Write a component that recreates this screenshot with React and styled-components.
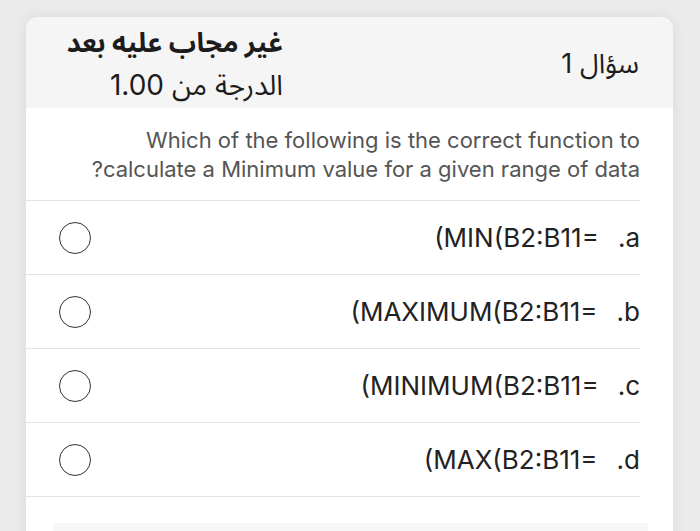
import React from "react";
import styled, { createGlobalStyle } from "styled-components";

const GlobalStyle = createGlobalStyle`
  html, body {
    margin: 0;
    padding: 0;
    background: #ebebeb;
    height: 100%;
    overflow: hidden;
  }
  body {
    font-family: "Inter", "Noto Sans Arabic", "DejaVu Sans", sans-serif;
  }
`;

const Page = styled.div`
  padding: 17px 27px 0 26px;
`;

const Card = styled.div`
  background: #fff;
  border-radius: 12px;
  box-shadow: 0 0 14px rgba(0, 0, 0, 0.08);
  overflow: hidden;
  min-height: 560px;
`;

const Header = styled.div`
  direction: rtl;
  display: grid;
  grid-template-columns: 356px 1fr;
  align-items: center;
  height: 91px;
  box-sizing: border-box;
  background: #f5f5f5;
  padding: 4px 34px 1px 0;
  color: #1c1c1c;
`;

const QuestionNo = styled.div`
  font-size: 27px;
  justify-self: start;
`;

const Status = styled.div`
  font-size: 27px;
  line-height: 42px;
  text-align: right;
`;

const StatusLine = styled.div`
  font-weight: ${(p) => (p.$bold ? 700 : 400)};
  font-size: ${(p) => (p.$bold ? "27px" : "28px")};
`;

const QuestionText = styled.div`
  direction: rtl;
  color: #555;
  font-size: 22px;
  line-height: 29px;
  padding: 18px 33px 16px 33px;
  text-align: right;
`;

const Options = styled.div`
  margin-right: 33px;
  border-top: 1px solid #e2e2e2;
`;

const OptionRow = styled.label`
  direction: rtl;
  display: flex;
  align-items: center;
  height: 73px;
  border-bottom: 1px solid #e2e2e2;
  padding-left: 33px;
  color: #222;
  font-size: 26px;
`;

const Letter = styled.span`
  margin-left: 19px;
`;

const Answer = styled.span`
  flex: 1;
  direction: ltr;
  text-align: right;
`;

const Radio = styled.span`
  width: 30px;
  height: 30px;
  border: 1.6px solid #333;
  border-radius: 50%;
`;

const FlagBox = styled.div`
  margin: 26px 25px 0 27px;
  height: 40px;
  background: #f7f7f7;
`;

// answers as they show up in the rtl view
const options = [
  { letter: "a.", text: "(MIN(B2:B11=" },
  { letter: "b.", text: "(MAXIMUM(B2:B11=" },
  { letter: "c.", text: "(MINIMUM(B2:B11=" },
  { letter: "d.", text: "(MAX(B2:B11=" },
];

export default function App() {
  return (
    <>
      <GlobalStyle />
      <Page>
        <Card>
          <Header>
            <QuestionNo>سؤال 1</QuestionNo>
            <Status>
              <StatusLine $bold>غير مجاب عليه بعد</StatusLine>
              <StatusLine>الدرجة من 1.00</StatusLine>
            </Status>
          </Header>
          <QuestionText>
            Which of the following is the correct function to
            <br />
            calculate a Minimum value for a given range of data?
          </QuestionText>
          <Options>
            {options.map((o) => (
              <OptionRow key={o.letter}>
                <Letter>{o.letter}</Letter>
                <Answer>{o.text}</Answer>
                <Radio />
              </OptionRow>
            ))}
          </Options>
          <FlagBox />
        </Card>
      </Page>
    </>
  );
}
